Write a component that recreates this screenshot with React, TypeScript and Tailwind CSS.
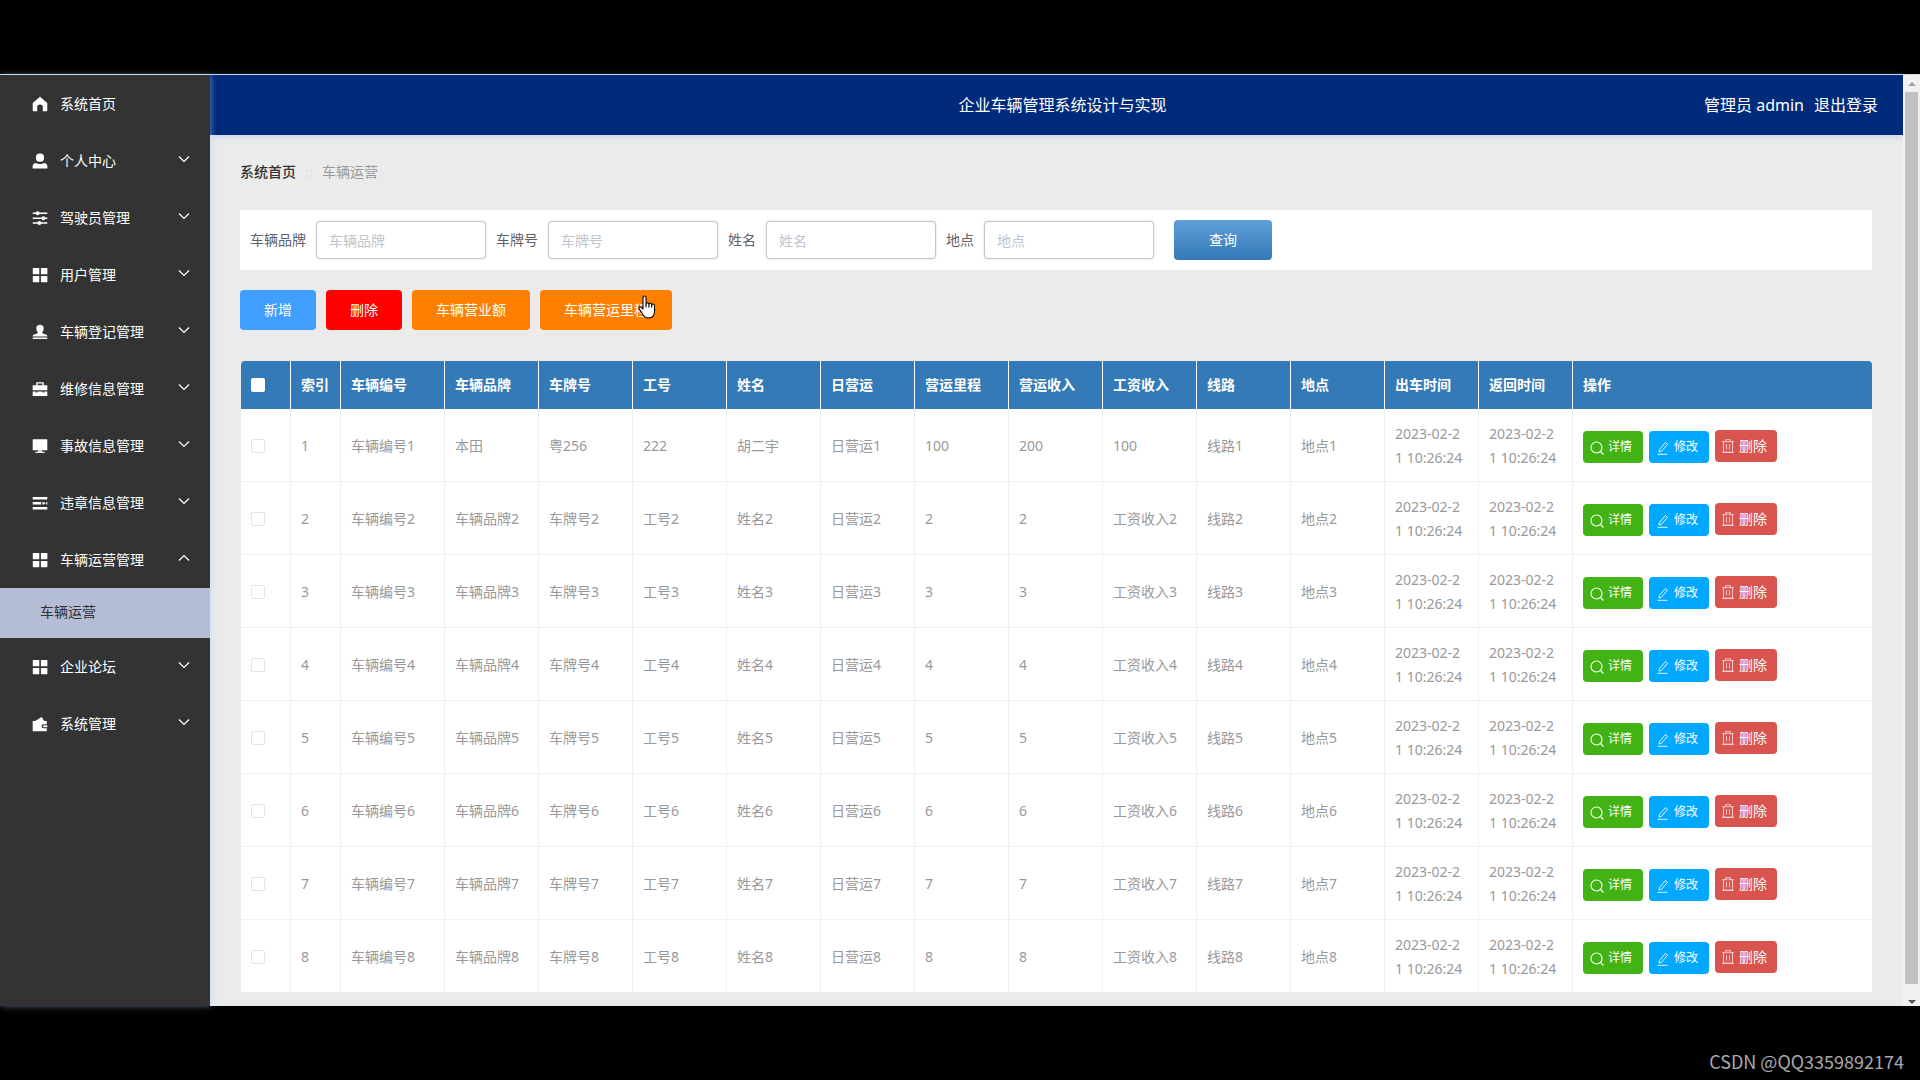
import type { ReactNode } from "react";

const FONT = "font-['Noto_Sans','Noto_Sans_CJK_SC',sans-serif]";

function Glyph({ children }: { children: ReactNode }) {
  return (
    <svg viewBox="0 0 16 16" className="size-4 shrink-0" fill="currentColor" aria-hidden="true">
      {children}
    </svg>
  );
}

const icons: Record<string, ReactNode> = {
  home: <path d="M8 .8 15.3 7v7.2a1 1 0 0 1-1 1h-3.500v-4a2.800 2.800 0 0 0-5.600 0v4H1.700a1 1 0 0 1-1-1V7z" />,
  user: (
    <>
      <rect x="4" y=".6" width="8" height="8.200" rx="3.600" />
      <path d="M.6 15.400v-1.900c0-2.200 1.400-3.500 3.600-3.500.9.700 2.200 1 3.800 1s2.900-.3 3.800-1c2.200 0 3.600 1.300 3.600 3.500v1.900z" />
    </>
  ),
  sliders: (
    <>
      <path d="M.7 2.500h14.600v1.600H.7zM.7 7.400h14.600V9H.7zM.7 12.200h14.600v1.600H.7z" />
      <circle cx="5.600" cy="3.300" r="2" />
      <circle cx="11.400" cy="8.200" r="2" />
      <circle cx="7.400" cy="13" r="2" />
    </>
  ),
  grid: (
    <>
      <rect x=".8" y="1" width="6.500" height="6.300" rx=".6" />
      <rect x="8.900" y="1" width="6.500" height="6.300" rx=".6" />
      <rect x=".8" y="8.900" width="6.500" height="6.300" rx=".6" />
      <rect x="8.900" y="8.900" width="6.500" height="6.300" rx=".6" />
    </>
  ),
  stamp: (
    <path d="M8 .8a3.700 3.700 0 0 1 3.700 3.700c0 1.700-1 2.800-1.500 4.300.9 1 2.300 1.400 3.800 1.800.9.300 1.300.9 1.300 1.900H.7c0-1 .4-1.600 1.300-1.900 1.500-.4 2.900-.8 3.800-1.800-.5-1.500-1.500-2.600-1.500-4.300A3.700 3.700 0 0 1 8 .8zM.7 13.400h14.600V15H.7z" />
  ),
  briefcase: (
    <path d="M4.300 1.200h7.400v3.100h3.600v4.900H.7V4.300h3.600zm1.400 1.300v1.800h4.600V2.500zM.7 10.400h3v1.200h1.600v-1.200h5.400v1.200h1.600v-1.200h3V15H.7z" fillRule="evenodd" />
  ),
  monitor: <path d="M.7 1.200h14.600v11H.7zM6 12.500h4v1.300h2.500V15h-9v-1.200H6z" />,
  list: (
    <path d="M.7 2h14.600v2.500H.7zM.7 7h8.600v2.500H.7zM10.500 7h1.200l2 1.200L11.700 9.500h-1.200zM14.200 7h1.100v2.500h-1.100zM.7 12h14.600v2.500H.7z" />
  ),
  wallet: (
    <path d="M.7 5h2.500L9.600 1l2.700 4h2.500v3.200h-3.200a2 2 0 0 0 0 4h3.200v3H.7zM12 9.300h3.300v2H12a1 1 0 0 1 0-2z" />
  ),
};

function Chevron({ up = false }: { up?: boolean }) {
  return (
    <svg viewBox="0 0 12 12" className="mb-1 size-3 shrink-0" fill="none" stroke="currentColor" strokeWidth="1.200" aria-hidden="true">
      <path d={up ? "M1 8.500 6 3.500l5 5" : "M1 3.500l5 5 5-5"} />
    </svg>
  );
}

type Menu = { icon: string; label: string; leaf?: boolean; child?: string };

const menus: Menu[] = [
  { icon: "home", label: "系统首页", leaf: true },
  { icon: "user", label: "个人中心" },
  { icon: "sliders", label: "驾驶员管理" },
  { icon: "grid", label: "用户管理" },
  { icon: "stamp", label: "车辆登记管理" },
  { icon: "briefcase", label: "维修信息管理" },
  { icon: "monitor", label: "事故信息管理" },
  { icon: "list", label: "违章信息管理" },
  { icon: "grid", label: "车辆运营管理", child: "车辆运营" },
  { icon: "grid", label: "企业论坛" },
  { icon: "wallet", label: "系统管理" },
];

function Sidebar() {
  return (
    <nav className="relative z-10 w-[210px] shrink-0 bg-[#333] text-sm text-white shadow-[1px_0_6px_rgba(170,205,255,0.5)]">
      <ul>
        {menus.map((m) => (
          <li key={m.label}>
            <button type="button" className="flex h-[57px] w-full items-center pr-5 pl-8 text-left">
              <Glyph>{icons[m.icon]}</Glyph>
              <span className="ml-3 flex-1">{m.label}</span>
              {!m.leaf && <Chevron up={!!m.child} />}
            </button>
            {m.child && (
              <a href="#operation" className="flex h-[50px] items-center bg-[#b4bcd6] pb-0.5 pl-10 text-[#333]">
                {m.child}
              </a>
            )}
          </li>
        ))}
      </ul>
    </nav>
  );
}

const fields = ["车辆品牌", "车牌号", "姓名", "地点"];

function SearchBar() {
  return (
    <form className="flex h-[60px] items-center gap-[10px] bg-white px-[10px] text-sm text-[#606266]">
      {fields.map((f) => (
        <label key={f} className="flex items-center gap-[10px]">
          {f}
          <input
            type="text"
            placeholder={f}
            className="h-[38px] w-[170px] rounded border border-[#c8c8c8] bg-white px-3 shadow-[0_0_2px_rgba(0,0,0,0.2)] outline-none placeholder:text-[#c0c4cc]"
          />
        </label>
      ))}
      <button
        type="button"
        className="ml-[10px] h-10 w-[98px] rounded bg-linear-to-b from-[#5f9fd9] to-[#337ab7] text-white"
      >
        查询
      </button>
    </form>
  );
}

const headers = [
  "索引", "车辆编号", "车辆品牌", "车牌号", "工号", "姓名", "日营运", "营运里程",
  "营运收入", "工资收入", "线路", "地点", "出车时间", "返回时间", "操作",
];

const rows: string[][] = Array.from({ length: 8 }, (_, i) => {
  const n = i + 1;
  return n === 1
    ? ["1", "车辆编号1", "本田", "粤256", "222", "胡二宇", "日营运1", "100", "200", "100", "线路1", "地点1"]
    : [`${n}`, `车辆编号${n}`, `车辆品牌${n}`, `车牌号${n}`, `工号${n}`, `姓名${n}`, `日营运${n}`, `${n}`, `${n}`, `工资收入${n}`, `线路${n}`, `地点${n}`];
});

function SearchIcon() {
  return (
    <svg viewBox="0 0 14 14" className="mt-0.5 size-[14px]" fill="none" stroke="currentColor" strokeWidth="1.100" aria-hidden="true">
      <circle cx="6.500" cy="6.500" r="5.500" />
      <path d="m10.500 10.500 3 3" />
    </svg>
  );
}

function EditIcon() {
  return (
    <svg viewBox="0 0 14 14" className="mt-0.5 size-[14px]" fill="none" stroke="currentColor" strokeWidth="0.900" aria-hidden="true">
      <path d="M3.500 8.500 9.500 1.500l2 1.800L5.500 10.300l-2.500.7zM1.500 13.300h10" />
    </svg>
  );
}

function TrashIcon() {
  return (
    <svg viewBox="0 0 14 14" className="size-[14px]" fill="none" stroke="currentColor" strokeWidth="0.800" strokeOpacity="0.850" aria-hidden="true">
      <path d="M1 2.700h12M4.500 2.700V.7h5v2M2.500 2.700v10.500h9V2.700M5.500 5v5.500M8.500 5v5.500M1 13.300h12" />
    </svg>
  );
}

function DataTable() {
  return (
    <table className="ml-px w-[calc(100%-1px)] table-fixed overflow-hidden border-separate border-spacing-0 rounded-t bg-white text-left text-sm text-[#999]">
      <colgroup>
        <col className="w-[50px]" />
        <col className="w-[50px]" />
        <col className="w-[104px]" />
        {headers.slice(2, 14).map((h) => (
          <col key={h} className="w-[94px]" />
        ))}
        <col />
      </colgroup>
      <thead className="bg-[#337ab7] text-white">
        <tr className="h-12">
          <th className="border-r border-white px-[10px]">
            <input type="checkbox" aria-label="全选" className="block size-[14px] appearance-none rounded-xs bg-white" />
          </th>
          {headers.map((h) => (
            <th key={h} className="border-r border-white pl-[10px] font-bold whitespace-nowrap last:border-r-0">
              {h}
            </th>
          ))}
        </tr>
      </thead>
      <tbody>
        {rows.map((r) => (
          <tr key={r[0]} className="h-[73px]">
            <td className="border-r border-b border-[#f0f0f0] px-[10px] pt-0.5">
              <input
                type="checkbox"
                aria-label={`选择 ${r[0]}`}
                className="block size-[14px] appearance-none rounded-xs border border-[#e4e4e4] bg-white"
              />
            </td>
            {r.map((c, i) => (
              <td key={i} className="border-r border-b border-[#f0f0f0] pt-0.5 pl-[10px] whitespace-nowrap">
                {c}
              </td>
            ))}
            {["out", "back"].map((k) => (
              <td key={k} className="border-r border-b border-[#f0f0f0] pt-0.5 pl-[10px] leading-6 whitespace-nowrap">
                2023-02-2
                <br />1 10:26:24
              </td>
            ))}
            <td className="border-b border-[#f0f0f0] pt-[3px] pl-[10px]">
              <div className="flex items-start gap-[6px] text-white">
                <button type="button" className="mt-px flex h-8 w-[60px] items-center gap-1 rounded bg-[#42b215] pl-[7px] text-xs">
                  <SearchIcon />
                  详情
                </button>
                <button type="button" className="mt-px flex h-8 w-[60px] items-center gap-1 rounded bg-[#00a8ff] pl-[7px] text-xs">
                  <EditIcon />
                  修改
                </button>
                <button type="button" className="flex h-8 w-[62px] items-center gap-1 rounded bg-[#d9534f] pl-[6px] text-sm">
                  <TrashIcon />
                  删除
                </button>
              </div>
            </td>
          </tr>
        ))}
      </tbody>
    </table>
  );
}

function HandCursor() {
  return (
    <svg viewBox="0 0 18 24" className="absolute top-[5px] right-[16px] h-6 w-[18px]" fill="#fff" stroke="#000" strokeWidth="1.100" strokeLinejoin="round" aria-hidden="true">
      <path d="M5 14V2.500a1.500 1.500 0 0 1 3 0V9c0-1.600 2.900-1.600 2.900.3 0-1.500 2.800-1.300 2.800.6 0-1.400 2.800-1.200 2.800.8v5.300c0 4-2 7-6 7-3.500 0-4.800-1.500-6.300-4.500L1 13.600c-.6-1.300 1-2.300 2.200-1.200z" />
      <path d="M8 9v3.500M10.900 9.300v3.200M13.700 10v2.500" fill="none" />
    </svg>
  );
}

function Scrollbar() {
  return (
    <div className="flex w-[17px] shrink-0 flex-col items-center bg-[#f1f1f1]" aria-hidden="true">
      <div className="flex h-[17px] items-center">
        <svg viewBox="0 0 8 4" className="h-1 w-2" fill="#a3a3a3"><path d="M0 4 4 0l4 4z" /></svg>
      </div>
      <div className="w-[13px] flex-1 bg-[#c1c1c1]" />
      <div className="flex h-[22px] items-end pb-[2px]">
        <svg viewBox="0 0 8 4" className="h-1 w-2" fill="#505050"><path d="M0 0h8L4 4z" /></svg>
      </div>
    </div>
  );
}

export default function App() {
  return (
    <div className={`min-h-screen bg-black pt-[74px] ${FONT}`}>
      <div className="flex border-t border-[#d5dae5]">
        <Sidebar />
        <div className="flex min-w-0 flex-1 flex-col bg-[#ebebeb]">
          <header className="flex h-[60px] items-center bg-[#002a7a] pr-[25px] pl-[37px] text-base text-white shadow-[0_1px_6px_rgba(150,180,255,0.5)]">
            <div className="flex-1" />
            <h1>企业车辆管理系统设计与实现</h1>
            <div className="flex flex-1 justify-end gap-[10px]">
              <span>管理员 admin</span>
              <a href="#logout">退出登录</a>
            </div>
          </header>
          <main className="pr-[31px] pb-[13px] pl-[30px]">
            <nav className="flex h-[75px] items-center pb-0.5 text-sm" aria-label="面包屑">
              <a href="#home" className="font-medium text-[#303133]">系统首页</a>
              <span className="mx-[9px] w-2 text-center text-[#dcdcdc]">::</span>
              <span className="text-[#999]">车辆运营</span>
            </nav>
            <SearchBar />
            <div className="mt-5 mb-[31px] flex gap-[10px] text-sm text-white">
              <button type="button" className="h-10 rounded bg-[#409eff] px-6">新增</button>
              <button type="button" className="h-10 rounded bg-[#ff0000] px-6">删除</button>
              <button type="button" className="h-10 rounded bg-[#ff8000] px-6">车辆营业额</button>
              <div className="relative">
                <button type="button" className="h-10 rounded bg-[#ff8000] px-6">车辆营运里程</button>
                <HandCursor />
              </div>
            </div>
            <DataTable />
          </main>
        </div>
        <Scrollbar />
      </div>
      <footer className="flex h-[74px] items-end justify-end pr-4 pb-[5px] font-['Noto_Sans_CJK_SC',sans-serif] text-lg text-[#a9a9a9]">
        CSDN @QQ3359892174
      </footer>
    </div>
  );
}
